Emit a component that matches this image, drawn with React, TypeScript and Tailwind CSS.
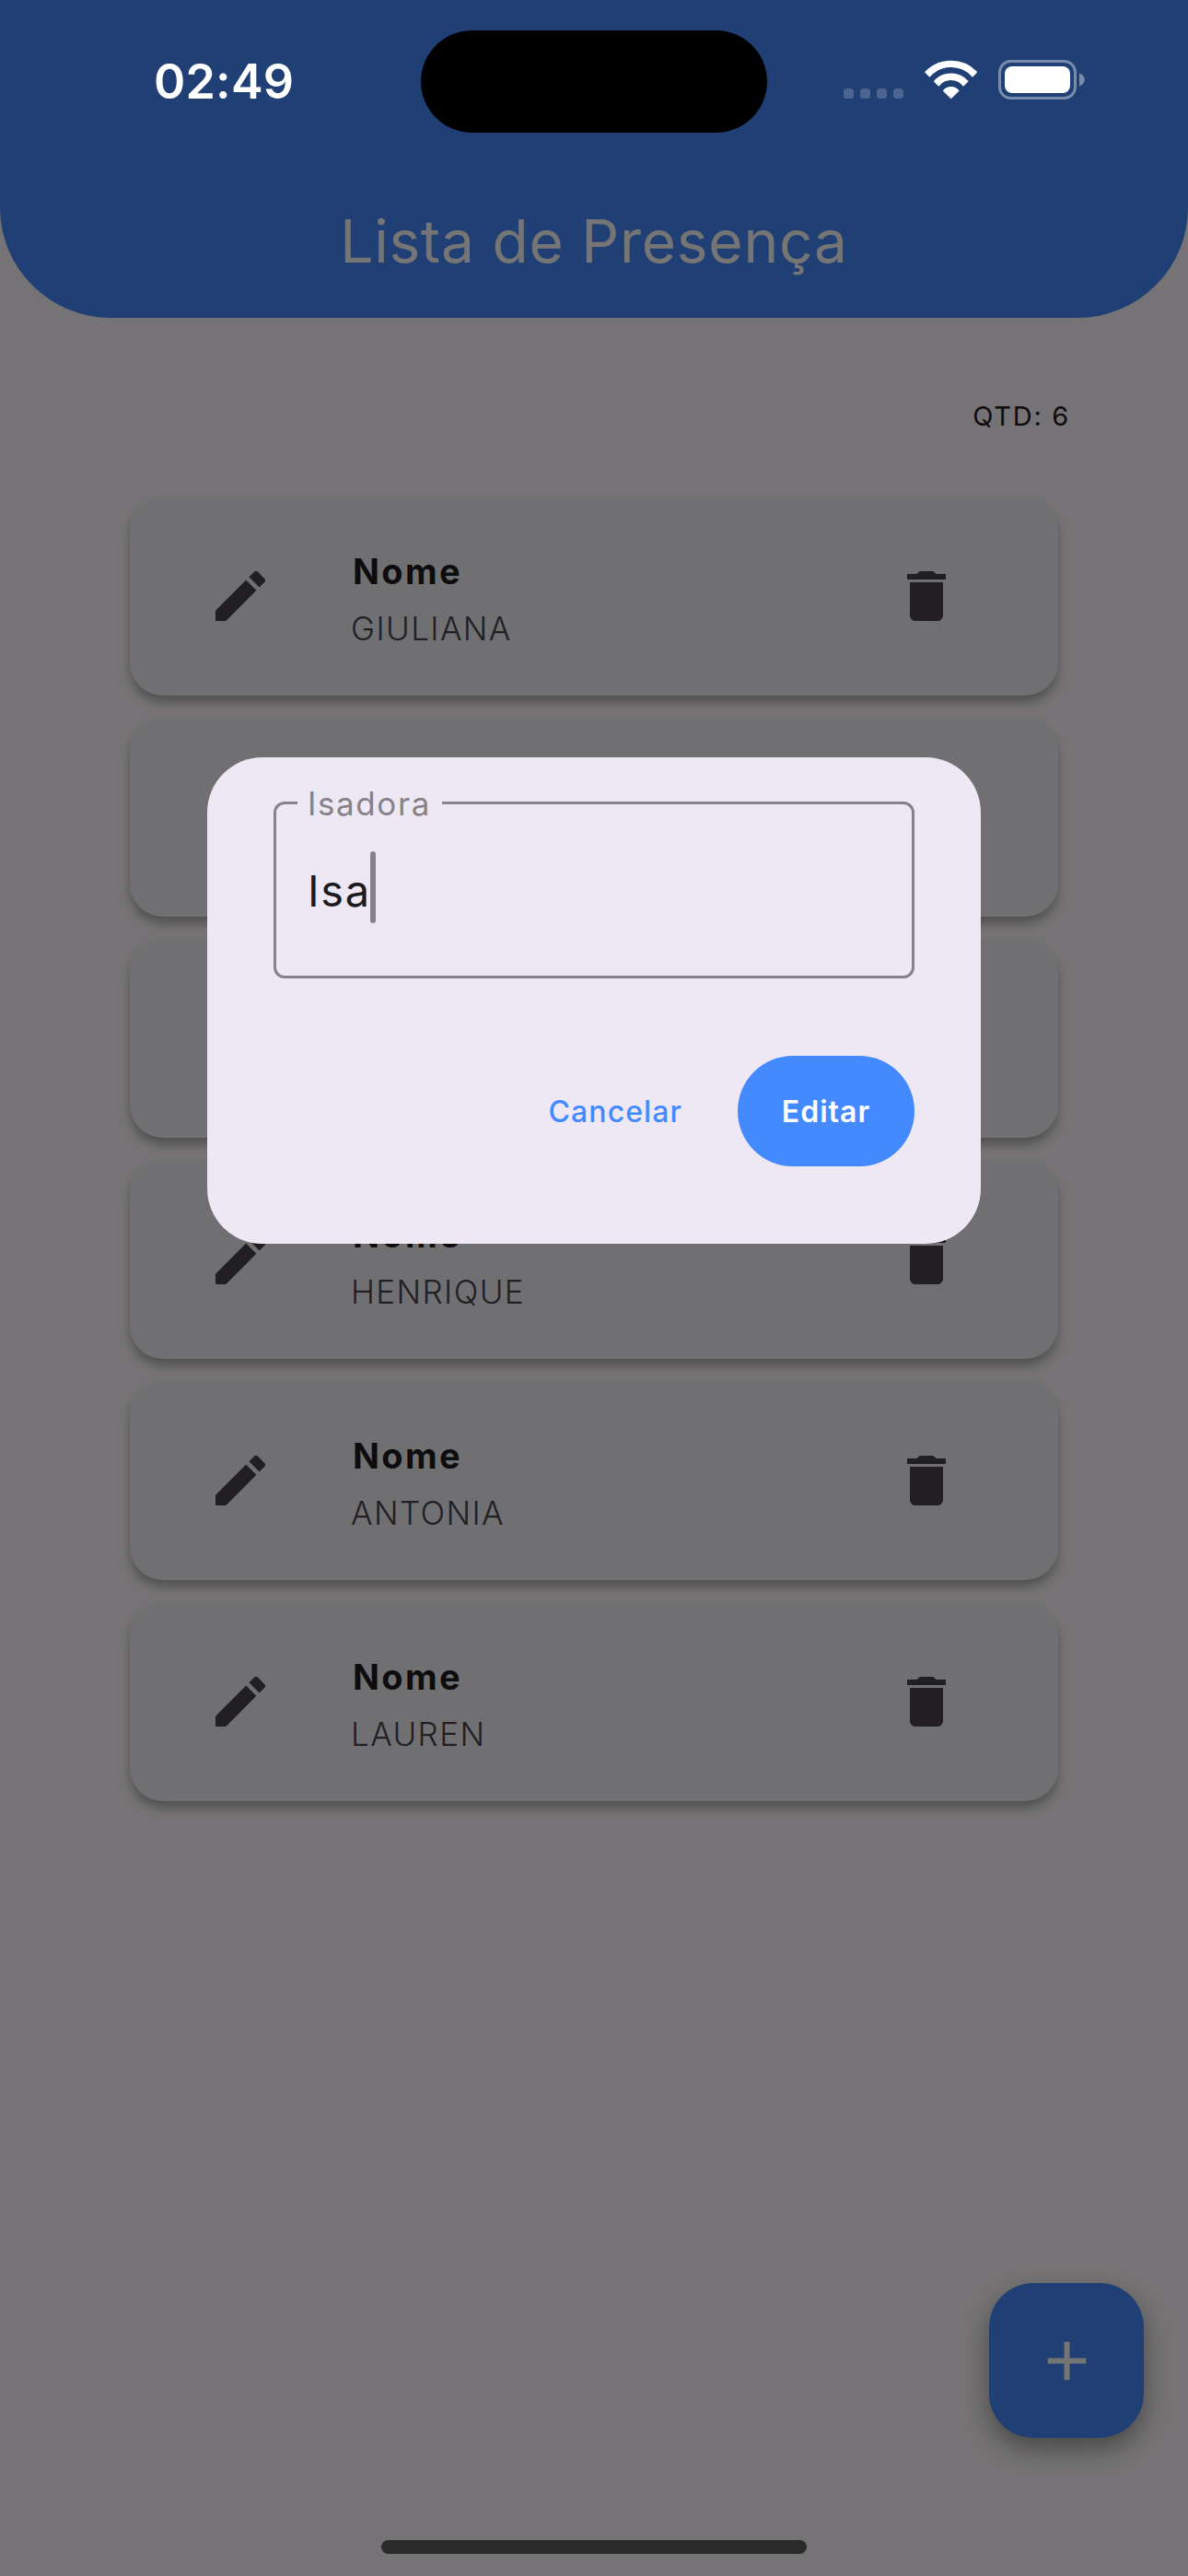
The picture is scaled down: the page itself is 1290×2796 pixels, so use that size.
import { MdAdd, MdDelete, MdEdit } from "react-icons/md";

const people = ["GIULIANA", "", "", "HENRIQUE", "ANTONIA", "LAUREN"];

function PersonCard({ name }: { name: string }) {
  return (
    <li className="flex h-[216px] items-center rounded-[36px] bg-[#f4f4f8] pl-[84px] pr-[107px] shadow-[0_8px_12px_-1px_rgba(0,0,0,0.32)]">
      {name && (
        <>
          <MdEdit className="size-[72px] shrink-0 text-[#49454f]" />
          <div className="ml-[85px] mt-2 flex grow flex-col">
            <span className="ml-px text-[38px] font-bold leading-[62px] tracking-[2.35px] text-[#1d1b20]">Nome</span>
            <span className="-ml-px text-[35px] font-[360] leading-[62px] tracking-[1.4px] text-[#49454f]">{name}</span>
          </div>
          <MdDelete className="size-[72px] shrink-0 text-[#49454f]" />
        </>
      )}
    </li>
  );
}

function StatusBar() {
  return (
    <div className="absolute inset-x-0 top-0 h-[177px]">
      <div className="absolute left-[457px] top-[33px] h-[111px] w-[376px] rounded-full bg-black" />
      <div className="flex h-full items-center justify-between pl-[167px] pr-[111px]">
        <span className="text-[52px] font-semibold leading-none tracking-[0.2px] text-white">02:49</span>
        <div className="mt-[-4px] flex items-start">
          <div className="mt-[31px] flex gap-[7px]">
            {[0, 1, 2, 3].map((dot) => (
              <span key={dot} className="size-[11px] rounded-[3.5px] bg-white/20" />
            ))}
          </div>
          <svg className="ml-[23px] h-[43px] w-[57.4px]" viewBox="0 0 57.4 43" fill="white" stroke="white" strokeWidth="1.6" strokeLinejoin="round">
            <path d="M1.1 13.2A38.4 38.4 0 0 1 56.3 13.2L52 17.6A31.3 31.3 0 0 0 5.400 17.6Z" />
            <path d="M10.800 23.300A24.2 24.2 0 0 1 46.6 23.300L42.100 27.700A17.2 17.2 0 0 0 15.300 27.700Z" />
            <path d="M20.800 33.500A10.5 10.5 0 0 1 36.600 33.500L28.700 41.300Z" />
          </svg>
          <svg className="ml-[23px] h-[43px] w-[95px]" viewBox="0 0 95 43">
            <rect x="1.500" y="1.500" width="82" height="40" rx="12" fill="none" stroke="white" strokeOpacity="0.4" strokeWidth="3" />
            <rect x="7" y="7" width="71" height="29" rx="8" fill="white" />
            <path d="M88 14.500c3 .8 5.700 3.700 5.700 7s-2.700 6.200-5.700 7z" fill="white" fillOpacity="0.4" />
          </svg>
        </div>
      </div>
    </div>
  );
}

function EditDialog() {
  return (
    <div className="absolute inset-0 flex items-start justify-center bg-black/54 pt-[822px]">
      <div role="dialog" className="flex h-[528px] w-[840px] flex-col rounded-[60px] bg-[#eee8f4] px-[72px] pt-12">
        <div className="relative flex h-48 shrink-0 items-center rounded-[12px] border-[3px] border-[#858389] pl-[34px]">
          <span className="absolute left-[23px] top-[-21px] w-[157px] bg-[#eee8f4] pl-[11px] text-[35px] font-[380] leading-[40px] tracking-[1.6px] text-[#858389]">
            Isadora
          </span>
          <span className="text-[47px] leading-none tracking-[1.7px] text-[#1d1b20]">Isa</span>
          <span className="-ml-px mt-[-6px] h-[78px] w-[6px] rounded-full bg-[#858389]" />
        </div>
        <div className="mt-[84px] flex items-center justify-end gap-[60px]">
          <button className="mt-px text-[32px] font-medium leading-none tracking-[1.09px] text-[#448aff]">Cancelar</button>
          <button className="h-[120px] w-[192px] rounded-full bg-[#448aff] pt-px text-[32px] font-semibold leading-none tracking-[1.03px] text-white">
            Editar
          </button>
        </div>
      </div>
    </div>
  );
}

export default function App() {
  return (
    <div className="relative h-[2796px] w-full overflow-hidden bg-[#fffbfe] font-['Inter',sans-serif]">
      <header className="flex h-[345px] justify-center rounded-b-[120px] bg-[#448aff] pt-[222px]">
        <h1 className="text-[64px] font-normal leading-[80px] tracking-[0.76px] text-white">Lista de Presença</h1>
      </header>
      <main className="px-[141px]">
        <div className="flex h-[194px] items-center justify-end pt-[18px]">
          <span className="-mr-[13px] text-[29px] font-[370] leading-none tracking-[1.7px] text-[#1d1b20]">QTD: 6</span>
        </div>
        <ul className="flex flex-col gap-6">
          {people.map((name, index) => (
            <PersonCard key={index} name={name} />
          ))}
        </ul>
      </main>
      <button className="absolute bottom-[150px] right-12 flex size-[168px] items-center justify-center rounded-[48px] bg-[#448aff] text-white shadow-[0_12px_28px_rgba(0,0,0,0.38)]">
        <MdAdd className="ml-[0.5px] mt-[0.5px] size-[71px]" />
      </button>
      <EditDialog />
      <StatusBar />
      <div className="absolute bottom-6 left-[414px] h-[15px] w-[462px] rounded-full bg-[#2a2a2a]" />
    </div>
  );
}
